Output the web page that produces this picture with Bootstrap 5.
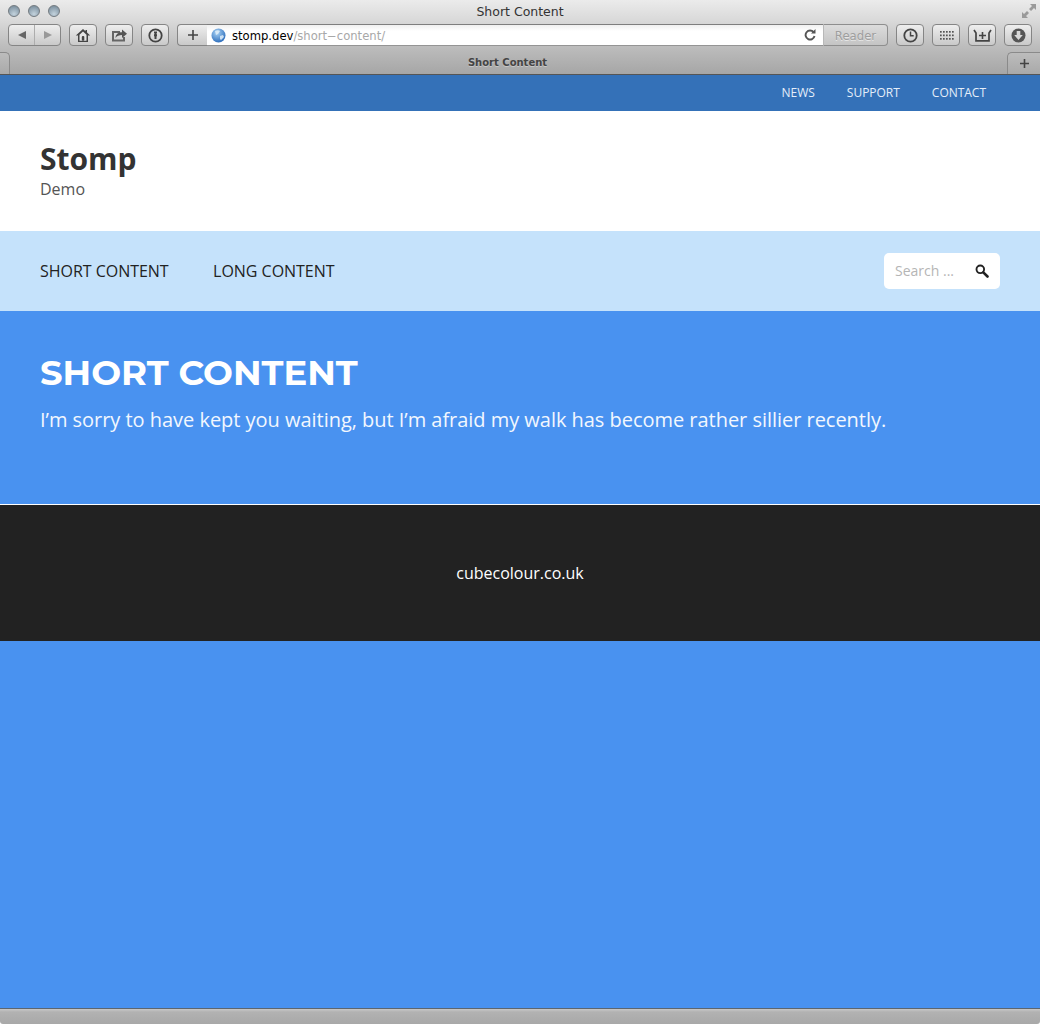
<!DOCTYPE html>
<html lang="en">
<head>
<meta charset="utf-8">
<title>Short Content</title>
<link href="https://cdn.jsdelivr.net/npm/bootstrap@5.3.0/dist/css/bootstrap.min.css" rel="stylesheet">
<style>
html,body{height:100%;}
body{font-family:"Open Sans",sans-serif;background:#4992f0;color:#333;display:flex;flex-direction:column;min-height:1024px;overflow:hidden;}
.chrome{height:75px;flex:none;background:linear-gradient(#ebebeb 0,#d8d8d8 22px,#bdbdbd 46px,#a6a6a6 74px);border-bottom:1px solid #555;font-family:"DejaVu Sans",sans-serif;display:flex;flex-direction:column;}
.titlebar{height:24px;flex:none;padding:5px 8px 0;position:relative;}
.lights{gap:8px;}
.light{width:12px;height:12px;border-radius:50%;background:radial-gradient(circle at 50% 80%,#c4d3dd,#6f8494);border:1px solid #737a80;}
.wintitle{font-size:12.5px;line-height:15px;color:#333;padding-top:4px;}
.resize{right:4px;top:4px;}
.toolbar{height:22px;flex:none;padding:0 8px;gap:8px;}
.tbtn{width:28px;height:22px;flex:none;border:1px solid #858585;border-radius:4px;background:linear-gradient(#eeeeee,#c9c9c9);padding:0;}
.tbtn svg{display:block;}
.backfwd{width:53px;}
.backfwd>span{flex:1;height:100%;}
.backfwd>span+span{border-left:1px solid #adadad;}
.addr{flex:1;height:22px;min-width:0;}
.addadd{width:30px;flex:none;height:22px;border:1px solid #858585;border-right:0;border-radius:4px 0 0 4px;background:linear-gradient(#eeeeee,#c9c9c9);}
.urlbox{flex:1;min-width:0;height:22px;background:linear-gradient(#f0f0f0 0,#fff 6px);border-top:1px solid #7e7e7e;border-bottom:1px solid #949494;padding:0 7px 0 4px;font-size:11.6px;line-height:18px;color:#000;}
.urltext{padding-left:6px;padding-top:2px;}
.urlpath{color:#a8a8a8;}
.readerb{width:65px;flex:none;height:22px;border:1px solid #8e8e8e;border-left:1px solid #b8b8b8;border-radius:0 4px 4px 0;background:linear-gradient(#dcdcdc,#c4c4c4);color:#9e9e9e;font-size:11.7px;line-height:22px;text-align:center;text-shadow:0 1px 0 #e6e6e6;}
.tabstrip{flex:1;position:relative;margin-top:6px;}
.tabname{font-size:10px;font-weight:700;color:#444;line-height:21px;text-align:center;padding-right:25px;text-shadow:0 1px 0 #c8c8c8;}
.tabedge{position:absolute;top:0;bottom:0;border:1px solid #8a8a8a;border-bottom:0;background:linear-gradient(#bcbcbc,#a9a9a9);}
.tabl{left:-1px;width:11px;border-radius:0 5px 0 0;border-left:0;}
.tabr{right:-1px;width:34px;border-radius:5px 0 0 0;border-right:0;text-align:center;}
.topstrip{height:36px;flex:none;background:#3471b8;padding-right:54px;gap:32px;}
.topstrip a{color:#e4eefa;font-size:12px;letter-spacing:-.02px;text-decoration:none;text-transform:uppercase;line-height:36px;}
.brandband{height:120px;flex:none;background:#fff;padding:29px 40px 0;}
.brandname{font-size:30px;font-weight:700;line-height:38px;color:#333;margin:0;}
.brandsub{font-size:16px;line-height:22px;color:#555;margin:0;}
.menuband{height:80px;flex:none;background:#c5e2fb;padding:0 40px;}
.menulinks{gap:44.5px;}
.menulinks a{color:#222;font-size:16px;letter-spacing:-.03px;text-decoration:none;text-transform:uppercase;}
.searchbox{width:116px;height:36px;background:#fff;border-radius:5px;padding:0 11px;margin:0;}
.searchbox span{font-size:14px;color:#b5b5b5;margin-bottom:2px;}
.heroband{height:193px;flex:none;background:#4992f0;padding:41px 40px 0;color:#fff;}
.herotitle{font-family:"Montserrat","Inter","Liberation Sans",sans-serif;font-size:35.4px;font-weight:700;line-height:42px;margin:0 0 12px;text-transform:uppercase;}
.herotext{font-size:20px;letter-spacing:-.03px;line-height:28px;margin:0;color:#f2f7fe;}
.footband{height:137px;flex:none;background:#222;border-top:1px solid #fff;color:#fff;font-size:16px;line-height:22px;padding-top:57px;text-align:center;}
.spacer{flex:1;}
.statuswrap{height:16px;flex:none;background:#fff;}
.statusbar{height:16px;background:linear-gradient(#c8c8c8,#b2b2b2 3px,#a8a8a8);border-top:1px solid #5c6670;border-radius:0 0 3px 3px;}
</style>
</head>
<body>
<div class="chrome">
  <div class="titlebar d-flex">
    <div class="lights d-flex"><span class="light"></span><span class="light"></span><span class="light"></span></div>
    <div class="wintitle position-absolute top-0 start-50 translate-middle-x">Short Content</div>
    <svg class="resize position-absolute" width="14" height="14" viewBox="0 0 14 14"><path d="M8 0h6v6l-2-2-3 3-2-2 3-3zM0 8v6h6l-2-2 3-3-2-2-3 3z" fill="#9a9a9a"/></svg>
  </div>
  <div class="toolbar d-flex align-items-center">
    <div class="tbtn backfwd d-flex align-items-center">
      <span class="d-flex align-items-center justify-content-center"><svg width="10" height="10" viewBox="0 0 10 10"><path d="M9 1v8L1 5z" fill="#666"/></svg></span>
      <span class="d-flex align-items-center justify-content-center"><svg width="10" height="10" viewBox="0 0 10 10"><path d="M1 1v8l8-4z" fill="#999"/></svg></span>
    </div>
    <div class="tbtn d-flex align-items-center justify-content-center"><svg width="16" height="15" viewBox="0 0 16 15"><path d="M8 1 .8 7.500h2.200V14h10V7.500h2.200L12 4.600V2h-1.500v1.200z" fill="#444"/><path d="M8 3.500 4.500 6.800V12.700h7V6.800z" fill="#e4e4e4"/><rect x="6.800" y="8" width="2.500" height="4.700" rx="1" fill="#444"/></svg></div>
    <div class="tbtn d-flex align-items-center justify-content-center"><svg width="17" height="14" viewBox="0 0 17 14"><path d="M1 3h8v2H3v6.500h9V9h2v4.500H1z" fill="#666"/><path d="M4.500 10c.3-4 3-5.700 6.500-5.700V1.500l5 4.200-5 4.300V7.100C8.300 7.100 6 8 4.500 10z" fill="#555"/></svg></div>
    <div class="tbtn d-flex align-items-center justify-content-center"><svg width="15" height="15" viewBox="0 0 15 15"><circle cx="7.500" cy="7.500" r="6.200" fill="none" stroke="#444" stroke-width="1.800"/><path d="M6 3.500h3v1.800H8.500v1H9v1.900H8.500V11H6.500V8.200H6V6.300h.5v-1H6z" fill="#444"/></svg></div>
    <div class="addr d-flex">
      <div class="addadd d-flex align-items-center justify-content-center"><svg width="10" height="10" viewBox="0 0 10 10"><path d="M4.200 0h1.600v4.200H10v1.600H5.800V10H4.200V5.800H0V4.200h4.200z" fill="#444"/></svg></div>
      <div class="urlbox d-flex align-items-center">
        <svg class="flex-none" width="15" height="15" viewBox="0 0 15 15"><defs><radialGradient id="gl" cx=".4" cy=".3" r=".8"><stop offset="0" stop-color="#a9d3f5"/><stop offset="1" stop-color="#1f62b5"/></radialGradient></defs><circle cx="7.500" cy="7.500" r="7" fill="url(#gl)"/><path d="M4 3c2-1 4-1 5 0L7 6 5 7zM9 8l3-1 1 2-3 3-1-1z" fill="#e2eef8" opacity=".85"/></svg>
        <span class="urltext flex-grow-1 text-nowrap">stomp.dev<span class="urlpath">/short−content/</span></span>
        <svg width="12" height="12" viewBox="0 0 12 12"><path d="M9.600 3.200A4.500 4.500 0 1 0 10.500 7" fill="none" stroke="#555" stroke-width="1.900"/><path d="M7 4.500h4.500V0z" fill="#555"/></svg>
      </div>
      <div class="readerb">Reader</div>
    </div>
    <div class="tbtn d-flex align-items-center justify-content-center"><svg width="15" height="15" viewBox="0 0 15 15"><circle cx="7.500" cy="7.500" r="6.200" fill="none" stroke="#444" stroke-width="1.800"/><path d="M7.500 3.500v4.300h3.200" fill="none" stroke="#444" stroke-width="1.500"/></svg></div>
    <div class="tbtn d-flex align-items-center justify-content-center"><svg width="15" height="11" viewBox="0 0 15 11" fill="#555"><rect x="1" y="1" width="1.700" height="1.700"/><rect x="4" y="1" width="1.700" height="1.700"/><rect x="7" y="1" width="1.700" height="1.700"/><rect x="10" y="1" width="1.700" height="1.700"/><rect x="13" y="1" width="1.700" height="1.700"/><rect x="1" y="4.500" width="1.700" height="1.700"/><rect x="4" y="4.500" width="1.700" height="1.700"/><rect x="7" y="4.500" width="1.700" height="1.700"/><rect x="10" y="4.500" width="1.700" height="1.700"/><rect x="13" y="4.500" width="1.700" height="1.700"/><rect x="1" y="8" width="1.700" height="1.700"/><rect x="4" y="8" width="1.700" height="1.700"/><rect x="7" y="8" width="1.700" height="1.700"/><rect x="10" y="8" width="1.700" height="1.700"/><rect x="13" y="8" width="1.700" height="1.700"/></svg></div>
    <div class="tbtn d-flex align-items-center justify-content-center"><svg width="19" height="13" viewBox="0 0 19 13"><path d="M1 1 3 4v7.800h13V4l2-3" fill="none" stroke="#444" stroke-width="1.700"/><path d="M8.700 3h1.600v2.700H13v1.600h-2.700V10H8.700V7.300H6V5.700h2.700z" fill="#444"/></svg></div>
    <div class="tbtn d-flex align-items-center justify-content-center"><svg width="15" height="15" viewBox="0 0 15 15"><circle cx="7.500" cy="7.500" r="7" fill="#555"/><path d="M5.700 3h3.600v4h2.500l-4.300 5-4.300-5h2.500z" fill="#d8d8d8"/></svg></div>
  </div>
  <div class="tabstrip">
    <div class="tabedge tabl"></div>
    <div class="tabname">Short Content</div>
    <div class="tabedge tabr d-flex align-items-center justify-content-center"><svg width="9" height="9" viewBox="0 0 9 9"><path d="M3.700 0h1.600v3.700H9v1.600H5.300V9H3.700V5.300H0V3.700h3.700z" fill="#444"/></svg></div>
  </div>
</div>
<nav class="topstrip d-flex justify-content-end">
  <a href="#">News</a><a href="#">Support</a><a href="#">Contact</a>
</nav>
<header class="brandband">
  <h1 class="brandname">Stomp</h1>
  <p class="brandsub">Demo</p>
</header>
<nav class="menuband d-flex align-items-center justify-content-between">
  <div class="menulinks d-flex"><a href="#">Short Content</a><a href="#">Long Content</a></div>
  <form class="searchbox d-flex align-items-center justify-content-between">
    <span>Search ...</span>
    <svg width="14" height="14" viewBox="0 0 14 14"><circle cx="5.300" cy="5.300" r="3.800" fill="none" stroke="#222" stroke-width="1.900"/><path d="M8.300 8.300 12.500 12.500" stroke="#222" stroke-width="2.600" stroke-linecap="round"/></svg>
  </form>
</nav>
<section class="heroband">
  <h2 class="herotitle">Short Content</h2>
  <p class="herotext">I’m sorry to have kept you waiting, but I’m afraid my walk has become rather sillier recently.</p>
</section>
<footer class="footband">cubecolour.co.uk</footer>
<div class="spacer"></div>
<div class="statuswrap"><div class="statusbar"></div></div>
</body>
</html>
